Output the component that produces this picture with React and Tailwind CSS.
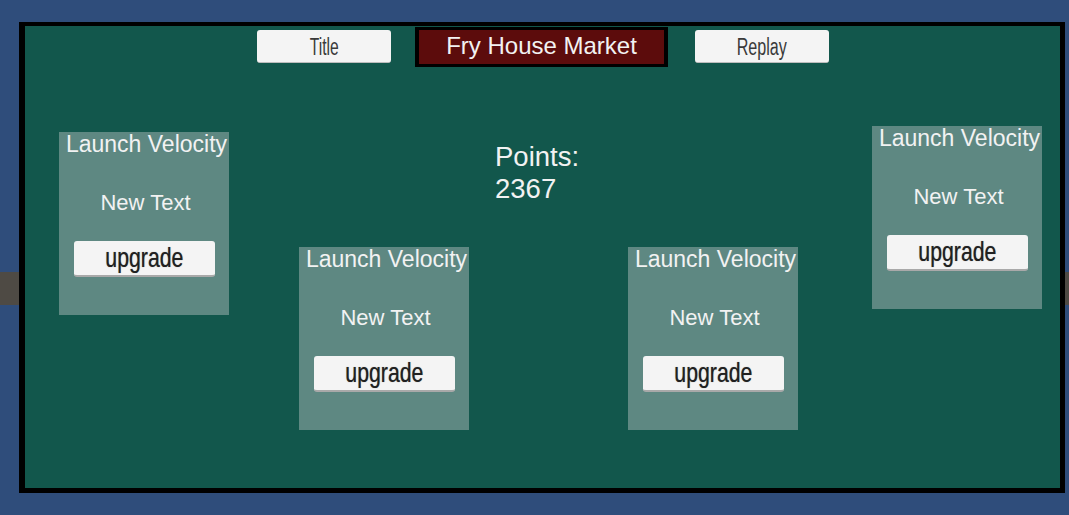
import React from "react";

const Card = ({ className }) => {
  return (
    <div className={"w-[170px] h-[183px] shrink-0 bg-[#5e8882] flex flex-col items-center pt-[2px] " + className}>
      <div className="w-full text-center pl-[5px] text-[23px] leading-[20px] text-[#f2f2f2] whitespace-nowrap">
        Launch Velocity
      </div>
      <div className="mt-[39px] text-center pl-[3px] text-[22px] leading-[20px] text-[#f2f2f2] whitespace-nowrap">
        New Text
      </div>
      <div className="mt-[28px] w-[141px] h-[36px] rounded-[3px] bg-[#f4f4f4] border-b-2 border-[#a9a9a9] text-center">
        <span className="inline-block scale-x-[0.76] text-[28px] leading-[33px] text-[#202020] [text-shadow:0_0_1px_rgba(0,0,0,0.5)]">
          upgrade
        </span>
      </div>
    </div>
  );
};

const App = () => {
  return (
    <div className="w-[1069px] h-[515px] bg-[#2f4d7b] flex font-['Liberation_Sans',Arial,sans-serif] overflow-hidden">
      {/* strip peeking out behind the panel */}
      <div className="w-[19px] shrink-0">
        <div className="mt-[272px] h-[33px] bg-[#4e4a44]"></div>
      </div>

      <div className="w-[1046px] h-[471px] mt-[22px] shrink-0 bg-[#12574c] border-l-[6px] border-t-4 border-r-[5px] border-b-[5px] border-black">
        {/* top bar */}
        <div className="flex items-start pl-[232px]">
          <div className="mt-[4px] w-[134px] h-[33px] rounded-[3px] bg-[#f4f4f4] border-b border-[#bdbdbd] text-center">
            <span className="inline-block scale-x-[0.68] text-[23px] leading-[34px] text-[#3a3a3a]">Title</span>
          </div>
          <div className="mt-[1px] ml-[24px] w-[253px] h-[40px] bg-[#5c0c0c] border-x-4 border-y-[3px] border-black text-center text-[24px] leading-[31px] text-[#f2f2f2]">
            Fry House Market
          </div>
          <div className="mt-[4px] ml-[27px] w-[134px] h-[33px] rounded-[3px] bg-[#f4f4f4] border-b border-[#bdbdbd] text-center">
            <span className="inline-block scale-x-[0.7] text-[23px] leading-[34px] text-[#3a3a3a]">Replay</span>
          </div>
        </div>

        {/* upgrades and points */}
        <div className="flex items-start">
          <Card className="ml-[34px] mt-[65px]" />
          <Card className="ml-[70px] mt-[180px]" />
          <div className="ml-[26px] mt-[74px] w-[109px] shrink-0 text-[27.5px] leading-[32px] text-[#f2f2f2]">
            <div>Points:</div>
            <div>2367</div>
          </div>
          <Card className="ml-[24px] mt-[180px]" />
          <Card className="ml-[74px] mt-[59px]" />
        </div>
      </div>

      <div className="flex-1">
        <div className="mt-[272px] h-[33px] bg-[#4e4a44]"></div>
      </div>
    </div>
  );
};

export default App;
